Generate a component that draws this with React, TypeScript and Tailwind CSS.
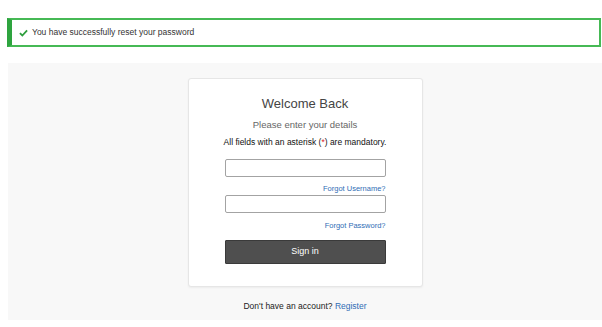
export default function App() {
  return (
    <div className="min-h-screen bg-white font-['Liberation_Sans',Arial,sans-serif] text-[#333]">
      <div className="pt-[18px] pl-[7px] pr-[1px]">
        <div className="flex h-[29px] items-center gap-[4px] border-2 border-l-[5px] border-[#46b955] border-l-[#2ea43f] bg-white pl-[7px]">
          <svg width="9" height="8" viewBox="0 0 10 8" className="shrink-0">
            <path d="M1 4.2 L3.7 6.8 L9 1.2" fill="none" stroke="#2e9e3d" strokeWidth="2" />
          </svg>
          <span className="text-[8.5px] leading-none text-[#333]">You have successfully reset your password</span>
        </div>
      </div>

      <div className="ml-[8px] mt-[16px] flex h-[257px] flex-col items-center bg-[#f8f8f8] pt-[15px]">
        <div className="flex h-[209px] w-[235px] flex-col items-center rounded-[3px] border border-[#e6e6e6] bg-white px-[36px] pt-[17px] shadow-[0_1px_2px_rgba(0,0,0,0.05)]">
          <h1 className="text-[13px] leading-[16px] text-[#444]">Welcome Back</h1>
          <p className="mt-[7px] text-[9.5px] leading-[12px] text-[#666]">Please enter your details</p>
          <p className="-mx-[10px] mt-[5px] whitespace-nowrap text-[8.5px] leading-[12px] text-[#111]">
            All fields with an asterisk (<span className="text-[#d9262c]">*</span>) are mandatory.
          </p>
          <input
            type="text"
            className="mt-[11px] h-[18px] w-full rounded-[2px] border border-[#a3a3a3] bg-white"
          />
          <a href="#" className="mt-[7px] self-end text-[7.5px] leading-[10px] text-[#2f6db5]">
            Forgot Username?
          </a>
          <input
            type="password"
            className="mt-[1px] h-[18px] w-full rounded-[2px] border border-[#a3a3a3] bg-white"
          />
          <a href="#" className="mt-[8px] self-end text-[7.5px] leading-[10px] text-[#2f6db5]">
            Forgot Password?
          </a>
          <button className="mt-[9px] h-[24px] w-full rounded-[1px] border border-[#3a3a3a] bg-[#4f4f4f] text-[9px] text-white">
            Sign in
          </button>
        </div>
        <p className="mt-[13px] text-[8.5px] leading-[12px] text-[#222]">
          Don&apos;t have an account? <a href="#" className="text-[#2f6db5]">Register</a>
        </p>
      </div>
    </div>
  )
}
